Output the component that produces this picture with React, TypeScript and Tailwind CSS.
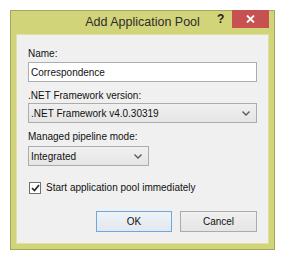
import React from "react";

function Chevron() {
  return (
    <svg width="8" height="5" viewBox="0 0 8 5" className="shrink-0">
      <path d="M0.5 0.5 L4 4 L7.5 0.5" fill="none" stroke="#5a5a5a" strokeWidth="1.4" />
    </svg>
  );
}

function Select({ value, width }: { value: string; width: string }) {
  return (
    <div
      className={`${width} h-[20px] flex items-center justify-between border border-[#acacac] bg-gradient-to-b from-[#f0f0f0] to-[#e5e5e5] pl-[2px] pr-[6px] text-[10px] leading-[13px] text-[#111]`}
    >
      <span>{value}</span>
      <Chevron />
    </div>
  );
}

export default function App() {
  return (
    <div
      className="w-[285px] h-[260px] bg-white pt-[10px] pl-[10px]"
      style={{ fontFamily: '"Liberation Sans", Arial, sans-serif' }}
    >
      <div className="relative w-[265px] h-[240px] border border-[#a5a85a] bg-[#d2d47a] flex flex-col px-[5px] pb-[5px]">
        <div className="h-[23px] shrink-0 flex items-center justify-center text-[12.5px] text-[#2d2d2d] -ml-[5px] -mr-[5px]">
          Add Application Pool
        </div>
        <div className="absolute left-[206px] top-[2px] text-[12px] leading-[12px] font-bold text-[#222]">?</div>
        <div className="absolute left-[221px] top-[-1px] w-[37px] h-[18px] bg-[#c75050] flex items-center justify-center">
          <svg width="9" height="8" viewBox="0 0 9 8">
            <path d="M1 0.5 L8 7.5 M8 0.5 L1 7.5" stroke="#fff" strokeWidth="1.8" />
          </svg>
        </div>
        <div className="flex-1 border border-[#dfe1a3] bg-[#f0f0f0] flex flex-col px-[11px] pt-[12px] text-[10px] leading-[13px] text-[#111]">
          <div className="h-[13px]">Name:</div>
          <div className="mt-[2px] h-[20px] flex items-center border border-[#abadb3] bg-white pl-[2px]">
            Correspondence
          </div>
          <div className="mt-[7px] h-[13px]">.NET Framework version:</div>
          <div className="mt-[1px]">
            <Select value=".NET Framework v4.0.30319" width="w-full" />
          </div>
          <div className="mt-[7px] h-[13px]">Managed pipeline mode:</div>
          <div className="mt-[3px]">
            <Select value="Integrated" width="w-[121px]" />
          </div>
          <div className="mt-[15px] h-[13px] flex items-center gap-[5px]">
            <div className="w-[12px] h-[12px] ml-[1px] border border-[#707070] bg-white flex items-center justify-center">
              <svg width="9" height="8" viewBox="0 0 9 8">
                <path d="M1 4 L3.5 6.5 L8 1" fill="none" stroke="#222" strokeWidth="1.6" />
              </svg>
            </div>
            <span>Start application pool immediately</span>
          </div>
          <div className="mt-[17px] flex justify-end gap-[8px]">
            <div className="w-[76px] h-[21px] flex items-center justify-center border border-[#6fa8e0] bg-gradient-to-b from-[#eef3f8] to-[#e2e8ee]">
              OK
            </div>
            <div className="w-[77px] h-[21px] flex items-center justify-center border border-[#acacac] bg-gradient-to-b from-[#f0f0f0] to-[#e5e5e5]">
              Cancel
            </div>
          </div>
        </div>
      </div>
    </div>
  );
}
